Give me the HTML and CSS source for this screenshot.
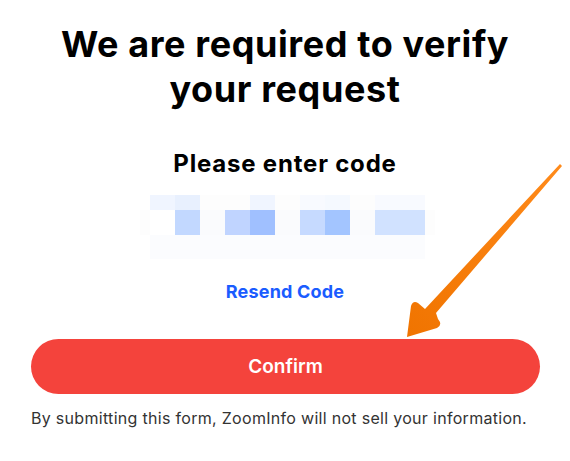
FILE: index.html
```html
<!DOCTYPE html>
<html lang="en">
<head>
<meta charset="utf-8">
<title>Verify your request</title>
<link rel="stylesheet" href="styles.css">
</head>
<body>
<main class="page">
  <h1 class="title">We are required to verify your request</h1>
  <h2 class="subtitle">Please enter code</h2>
  <div class="code" aria-label="Verification code (blurred)">
    <span class="px w0"></span><span class="px a1"></span><span class="px a2"></span><span class="px w1"></span><span class="px w1"></span><span class="px a1"></span><span class="px w1"></span><span class="px a3"></span><span class="px a4"></span><span class="px w1"></span><span class="px a3"></span><span class="px a3"></span><span class="px w0"></span>
    <span class="px w1"></span><span class="px w0"></span><span class="px b1"></span><span class="px w2"></span><span class="px b2"></span><span class="px b3"></span><span class="px w2"></span><span class="px b4"></span><span class="px b5"></span><span class="px w2"></span><span class="px b6"></span><span class="px b6"></span><span class="px w1"></span>
    <span class="px w0"></span><span class="px c1"></span><span class="px c1"></span><span class="px c1"></span><span class="px c1"></span><span class="px c1"></span><span class="px c1"></span><span class="px c1"></span><span class="px c1"></span><span class="px c1"></span><span class="px c1"></span><span class="px c1"></span><span class="px w0"></span>
  </div>
  <a class="resend" href="#">Resend Code</a>
  <button class="confirm" type="button">Confirm</button>
  <p class="note">By submitting this form, ZoomInfo will not sell your information.</p>
</main>
<svg class="arrow" width="570" height="461" viewBox="0 0 570 461" aria-hidden="true">
  <defs>
    <linearGradient id="ag" x1="560" y1="166" x2="408" y2="336" gradientUnits="userSpaceOnUse">
      <stop offset="0" stop-color="#ff8a1a"/>
      <stop offset="1" stop-color="#f07400"/>
    </linearGradient>
  </defs>
  <path fill="url(#ag)" d="M562 166 L560 164 L425 309 L418 303 Q413 300 411 306 L407 337 L437 328 Q443 325 438 319 L436 313 Z"/>
</svg>
</body>
</html>
```
FILE: styles.css
```css
* { box-sizing: border-box; }
html, body { margin: 0; padding: 0; background: #fff; }
body {
  width: 570px;
  height: 461px;
  overflow: hidden;
  position: relative;
  font-family: "Inter", "Lato", sans-serif;
  color: #000;
}
.page {
  display: flex;
  flex-direction: column;
  align-items: center;
  padding: 22px 30px 0 30px;
}
.title {
  margin: 0;
  width: 500px;
  text-align: center;
  font-size: 36px;
  line-height: 45px;
  font-weight: 700;
  letter-spacing: 0.6px;
}
.subtitle {
  margin: 36px 0 0;
  font-size: 24px;
  line-height: 32px;
  font-weight: 700;
  letter-spacing: 0.8px;
}
.code {
  margin-top: 15px;
  display: grid;
  grid-template-columns: 10px repeat(11, 25px) 10px;
  grid-template-rows: 15px 25px 24px;
  margin-left: 5px;
}
.px { display: block; }
.w0 { background: #ffffff; }
.w1 { background: #fdfdfd; }
.w2 { background: #fafbfd; }
.a1 { background: #f0f5ff; }
.a2 { background: #e8f0fe; }
.a3 { background: #f8faff; }
.a4 { background: #f5f9ff; }
.b1 { background: #c2d8ff; }
.b2 { background: #c0d4ff; }
.b3 { background: #a0c0ff; }
.b4 { background: #c6daff; }
.b5 { background: #a3c5ff; }
.b6 { background: #d1e2ff; }
.c1 { background: #fbfcfe; }
.resend {
  margin-top: 21px;
  font-size: 18px;
  line-height: 24px;
  font-weight: 700;
  color: #1a5cff;
  text-decoration: none;
  letter-spacing: 0.2px;
}
.confirm {
  margin-top: 35px;
  width: 509px;
  height: 55px;
  border: none;
  border-radius: 28px;
  background: #f4433c;
  color: #fff;
  font-family: inherit;
  font-size: 19px;
  font-weight: 600;
  align-self: flex-start;
  margin-left: 1px;
}
.note {
  margin: 13px 0 0;
  align-self: flex-start;
  margin-left: 1px;
  font-size: 16px;
  line-height: 22px;
  letter-spacing: 0.3px;
  color: #333;
}
.arrow {
  position: absolute;
  left: 0;
  top: 0;
  pointer-events: none;
}
```
